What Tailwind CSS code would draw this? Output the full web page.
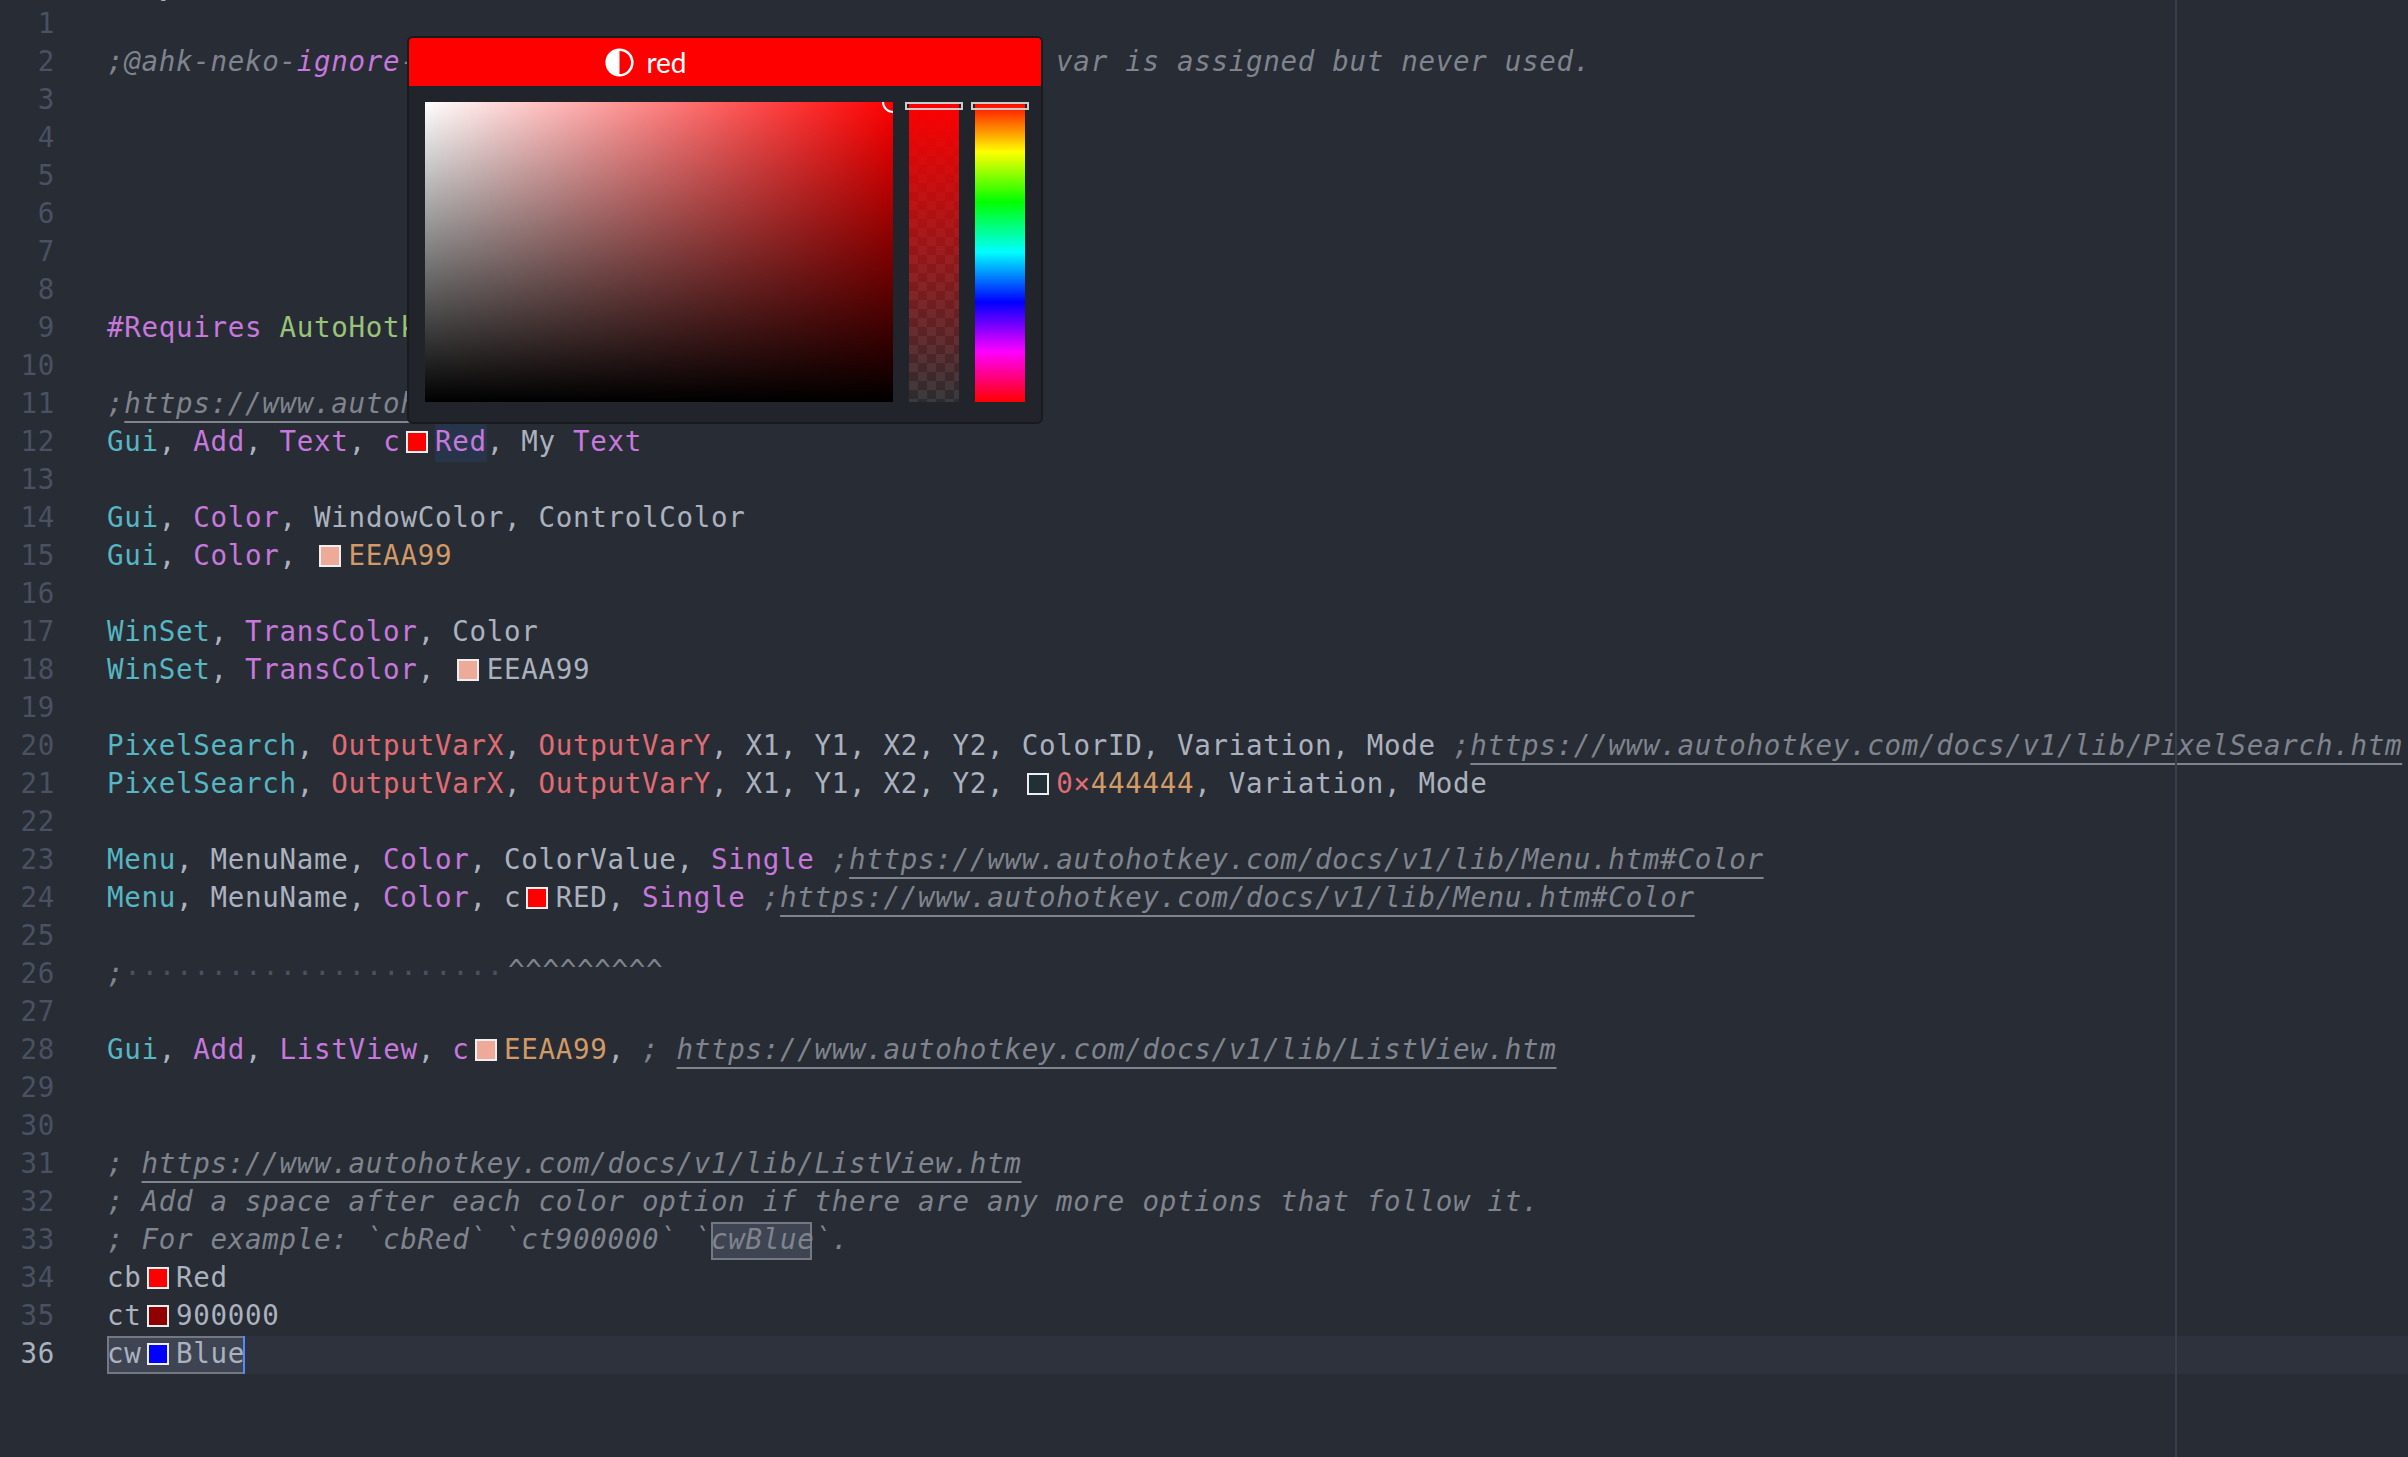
<!DOCTYPE html>
<html>
<head>
<meta charset="utf-8">
<title>color picker</title>
<script src="https://cdn.jsdelivr.net/npm/@tailwindcss/browser@4"></script>
</head>
<body class="bg-[#282c34]">
<div class="relative w-[2408px] h-[1457px] overflow-hidden bg-[#282c34] text-[#abb2bf] font-['DejaVu_Sans_Mono',monospace] text-[27.5px] tracking-[0.7px] leading-[35px]">

  <!-- Editor lines -->
  <div class="flex flex-col -mt-[32px] whitespace-pre">
    <div class="flex h-[38px]"><div class="w-[107px] pr-[52px] text-right shrink-0 text-[#495162]"> </div><div class="text-[#abb2bf]">   y</div></div>
    <div class="flex h-[38px]"><div class="w-[107px] pr-[52px] text-right shrink-0 text-[#495162]">1</div><div></div></div>
    <div class="flex h-[38px]"><div class="w-[107px] pr-[52px] text-right shrink-0 text-[#495162]">2</div><div class="italic text-[#7f848e]">;@ahk-neko-<span class="text-[#c678dd]">ignore</span>-fn 1 line; at 4/22/2021, 9:52:15 AM  var is assigned but never used.</div></div>
    <div class="flex h-[38px]"><div class="w-[107px] pr-[52px] text-right shrink-0 text-[#495162]">3</div><div></div></div>
    <div class="flex h-[38px]"><div class="w-[107px] pr-[52px] text-right shrink-0 text-[#495162]">4</div><div></div></div>
    <div class="flex h-[38px]"><div class="w-[107px] pr-[52px] text-right shrink-0 text-[#495162]">5</div><div></div></div>
    <div class="flex h-[38px]"><div class="w-[107px] pr-[52px] text-right shrink-0 text-[#495162]">6</div><div></div></div>
    <div class="flex h-[38px]"><div class="w-[107px] pr-[52px] text-right shrink-0 text-[#495162]">7</div><div></div></div>
    <div class="flex h-[38px]"><div class="w-[107px] pr-[52px] text-right shrink-0 text-[#495162]">8</div><div></div></div>
    <div class="flex h-[38px]"><div class="w-[107px] pr-[52px] text-right shrink-0 text-[#495162]">9</div><div><span class="text-[#c678dd]">#Requires</span> <span class="text-[#98c379]">AutoHotkey</span></div></div>
    <div class="flex h-[38px]"><div class="w-[107px] pr-[52px] text-right shrink-0 text-[#495162]">10</div><div></div></div>
    <div class="flex h-[38px]"><div class="w-[107px] pr-[52px] text-right shrink-0 text-[#495162]">11</div><div class="italic text-[#7f848e]">;<span class="underline decoration-2 underline-offset-[8px] [text-decoration-skip-ink:none]">https://www.autohotkey.com/docs/v1/lib/Gui.htm</span></div></div>
    <div class="flex h-[38px]"><div class="w-[107px] pr-[52px] text-right shrink-0 text-[#495162]">12</div><div><span class="text-[#56b6c2]">Gui</span>, <span class="text-[#c678dd]">Add</span>, <span class="text-[#c678dd]">Text</span>, <span class="text-[#c678dd]">c</span><span class="inline-block w-[22px] h-[22px] ml-[5.25px] mr-[7.25px] align-[-2px] border-2 border-[#eeeeee] bg-[#ff0000]"></span><span class="inline-block h-[38px] bg-[#27354a] text-[#c678dd]">Red</span>, My <span class="text-[#c678dd]">Text</span></div></div>
    <div class="flex h-[38px]"><div class="w-[107px] pr-[52px] text-right shrink-0 text-[#495162]">13</div><div></div></div>
    <div class="flex h-[38px]"><div class="w-[107px] pr-[52px] text-right shrink-0 text-[#495162]">14</div><div><span class="text-[#56b6c2]">Gui</span>, <span class="text-[#c678dd]">Color</span>, WindowColor, ControlColor</div></div>
    <div class="flex h-[38px]"><div class="w-[107px] pr-[52px] text-right shrink-0 text-[#495162]">15</div><div><span class="text-[#56b6c2]">Gui</span>, <span class="text-[#c678dd]">Color</span>, <span class="inline-block w-[22px] h-[22px] ml-[5.25px] mr-[7.25px] align-[-2px] border-2 border-[#eeeeee] bg-[#eeaa99]"></span><span class="text-[#d19a66]">EEAA99</span></div></div>
    <div class="flex h-[38px]"><div class="w-[107px] pr-[52px] text-right shrink-0 text-[#495162]">16</div><div></div></div>
    <div class="flex h-[38px]"><div class="w-[107px] pr-[52px] text-right shrink-0 text-[#495162]">17</div><div><span class="text-[#56b6c2]">WinSet</span>, <span class="text-[#c678dd]">TransColor</span>, Color</div></div>
    <div class="flex h-[38px]"><div class="w-[107px] pr-[52px] text-right shrink-0 text-[#495162]">18</div><div><span class="text-[#56b6c2]">WinSet</span>, <span class="text-[#c678dd]">TransColor</span>, <span class="inline-block w-[22px] h-[22px] ml-[5.25px] mr-[7.25px] align-[-2px] border-2 border-[#eeeeee] bg-[#eeaa99]"></span>EEAA99</div></div>
    <div class="flex h-[38px]"><div class="w-[107px] pr-[52px] text-right shrink-0 text-[#495162]">19</div><div></div></div>
    <div class="flex h-[38px]"><div class="w-[107px] pr-[52px] text-right shrink-0 text-[#495162]">20</div><div><span class="text-[#56b6c2]">PixelSearch</span>, <span class="text-[#e06c75]">OutputVarX</span>, <span class="text-[#e06c75]">OutputVarY</span>, X1, Y1, X2, Y2, ColorID, Variation, Mode <span class="italic text-[#7f848e]">;<span class="underline decoration-2 underline-offset-[8px] [text-decoration-skip-ink:none]">https://www.autohotkey.com/docs/v1/lib/PixelSearch.htm</span></span></div></div>
    <div class="flex h-[38px]"><div class="w-[107px] pr-[52px] text-right shrink-0 text-[#495162]">21</div><div><span class="text-[#56b6c2]">PixelSearch</span>, <span class="text-[#e06c75]">OutputVarX</span>, <span class="text-[#e06c75]">OutputVarY</span>, X1, Y1, X2, Y2, <span class="inline-block w-[22px] h-[22px] ml-[5.25px] mr-[7.25px] align-[-2px] border-2 border-[#eeeeee] bg-[#1f3036]"></span><span class="text-[#e06c75]">0×</span><span class="text-[#d19a66]">444444</span>, Variation, Mode</div></div>
    <div class="flex h-[38px]"><div class="w-[107px] pr-[52px] text-right shrink-0 text-[#495162]">22</div><div></div></div>
    <div class="flex h-[38px]"><div class="w-[107px] pr-[52px] text-right shrink-0 text-[#495162]">23</div><div><span class="text-[#56b6c2]">Menu</span>, MenuName, <span class="text-[#c678dd]">Color</span>, ColorValue, <span class="text-[#c678dd]">Single</span> <span class="italic text-[#7f848e]">;<span class="underline decoration-2 underline-offset-[8px] [text-decoration-skip-ink:none]">https://www.autohotkey.com/docs/v1/lib/Menu.htm#Color</span></span></div></div>
    <div class="flex h-[38px]"><div class="w-[107px] pr-[52px] text-right shrink-0 text-[#495162]">24</div><div><span class="text-[#56b6c2]">Menu</span>, MenuName, <span class="text-[#c678dd]">Color</span>, c<span class="inline-block w-[22px] h-[22px] ml-[5.25px] mr-[7.25px] align-[-2px] border-2 border-[#eeeeee] bg-[#ff0000]"></span>RED, <span class="text-[#c678dd]">Single</span> <span class="italic text-[#7f848e]">;<span class="underline decoration-2 underline-offset-[8px] [text-decoration-skip-ink:none]">https://www.autohotkey.com/docs/v1/lib/Menu.htm#Color</span></span></div></div>
    <div class="flex h-[38px]"><div class="w-[107px] pr-[52px] text-right shrink-0 text-[#495162]">25</div><div></div></div>
    <div class="flex h-[38px]"><div class="w-[107px] pr-[52px] text-right shrink-0 text-[#495162]">26</div><div class="italic text-[#7f848e]">;<span class="not-italic text-[#4b5160]">······················</span><span class="not-italic relative left-[4px] -top-[3px]">^^^^^^^^^</span></div></div>
    <div class="flex h-[38px]"><div class="w-[107px] pr-[52px] text-right shrink-0 text-[#495162]">27</div><div></div></div>
    <div class="flex h-[38px]"><div class="w-[107px] pr-[52px] text-right shrink-0 text-[#495162]">28</div><div><span class="text-[#56b6c2]">Gui</span>, <span class="text-[#c678dd]">Add</span>, <span class="text-[#c678dd]">ListView</span>, <span class="text-[#c678dd]">c</span><span class="inline-block w-[22px] h-[22px] ml-[5.25px] mr-[7.25px] align-[-2px] border-2 border-[#eeeeee] bg-[#eeaa99]"></span><span class="text-[#d19a66]">EEAA99</span>, <span class="italic text-[#7f848e]">; <span class="underline decoration-2 underline-offset-[8px] [text-decoration-skip-ink:none]">https://www.autohotkey.com/docs/v1/lib/ListView.htm</span></span></div></div>
    <div class="flex h-[38px]"><div class="w-[107px] pr-[52px] text-right shrink-0 text-[#495162]">29</div><div></div></div>
    <div class="flex h-[38px]"><div class="w-[107px] pr-[52px] text-right shrink-0 text-[#495162]">30</div><div></div></div>
    <div class="flex h-[38px]"><div class="w-[107px] pr-[52px] text-right shrink-0 text-[#495162]">31</div><div class="italic text-[#7f848e]">; <span class="underline decoration-2 underline-offset-[8px] [text-decoration-skip-ink:none]">https://www.autohotkey.com/docs/v1/lib/ListView.htm</span></div></div>
    <div class="flex h-[38px]"><div class="w-[107px] pr-[52px] text-right shrink-0 text-[#495162]">32</div><div class="italic text-[#7f848e]">; Add a space after each color option if there are any more options that follow it.</div></div>
    <div class="flex h-[38px]"><div class="w-[107px] pr-[52px] text-right shrink-0 text-[#495162]">33</div><div class="italic text-[#7f848e]">; For example: `cbRed` `ct900000` `<span class="inline-block w-[101px] mr-[2.5px] h-[38px] bg-[#3e4452] shadow-[inset_0_0_0_2px_#737883]">cwBlue</span>`.</div></div>
    <div class="flex h-[38px]"><div class="w-[107px] pr-[52px] text-right shrink-0 text-[#495162]">34</div><div>cb<span class="inline-block w-[22px] h-[22px] ml-[5.25px] mr-[7.25px] align-[-2px] border-2 border-[#eeeeee] bg-[#ff0000]"></span>Red</div></div>
    <div class="flex h-[38px]"><div class="w-[107px] pr-[52px] text-right shrink-0 text-[#495162]">35</div><div>ct<span class="inline-block w-[22px] h-[22px] ml-[5.25px] mr-[7.25px] align-[-2px] border-2 border-[#eeeeee] bg-[#900000]"></span>900000</div></div>
    <div class="flex h-[38px]"><div class="w-[107px] pr-[52px] text-right shrink-0 text-[#abb2bf]">36</div><div class="flex-1 bg-[#2e323d]"><span class="inline-block h-[38px] bg-[#3e4452] shadow-[inset_0_0_0_2px_#737883]">cw<span class="inline-block w-[22px] h-[22px] ml-[5.25px] mr-[7.25px] align-[-2px] border-2 border-[#eeeeee] bg-[#0000ff]"></span>Blue</span><span class="inline-block -ml-[2px] w-[2px] h-[38px] align-top bg-[#528bff]"></span></div></div>
  </div>

  <!-- Print margin ruler -->
  <div class="absolute left-[2175px] top-0 w-[2px] h-full bg-[#3b3f4a]"></div>

  <!-- Color picker popup -->
  <div class="absolute left-[407px] top-[36px] w-[636px] h-[388px] bg-[#21252b] border-2 border-[#181a1f] rounded-md overflow-hidden font-['Lato',sans-serif] tracking-normal">
    <div class="flex h-[48px] bg-[#ff0000] text-white text-[28px] leading-[48px]">
      <div class="flex-1 flex items-center justify-center gap-[12px]">
        <svg class="w-[29px] h-[29px]" viewBox="0 0 29 29">
          <circle cx="14.5" cy="14.5" r="12.8" fill="none" stroke="#fff" stroke-width="2.6"/>
          <path d="M14.5 1.5a13 13 0 0 0 0 26z" fill="#fff"/>
        </svg>
        <span>red</span>
      </div>
      <div class="w-[158px] bg-[#ff0000]"></div>
    </div>
    <div class="flex gap-[16px] pl-[16px] pt-[16px]">
      <!-- Saturation box -->
      <div class="relative w-[468px] h-[300px] overflow-hidden bg-[linear-gradient(to_right,#ffffff,#ff0000)]">
        <div class="absolute inset-0 bg-[linear-gradient(to_bottom,transparent,#000000)]"></div>
        <div class="absolute -top-[11px] -right-[11px] w-[22px] h-[22px] rounded-full border-2 border-white"></div>
      </div>
      <!-- Alpha strip -->
      <div class="relative w-[50px] h-[300px] bg-[repeating-conic-gradient(#3a3a3d_0_25%,#2b2c30_0_50%)] bg-[length:18px_18px]">
        <div class="absolute inset-0 bg-[linear-gradient(to_bottom,#ff0000,transparent)]"></div>
        <div class="absolute -left-[4px] top-0 w-[58px] h-[8px] border-2 border-[#cccccc]"></div>
      </div>
      <!-- Hue strip -->
      <div class="relative w-[50px] h-[300px] bg-[linear-gradient(to_bottom,#ff0000,#ffff00,#00ff00,#00ffff,#0000ff,#ff00ff,#ff0000)]">
        <div class="absolute -left-[4px] top-0 w-[58px] h-[8px] border-2 border-[#cccccc]"></div>
      </div>
    </div>
  </div>
</div>
</body>
</html>
